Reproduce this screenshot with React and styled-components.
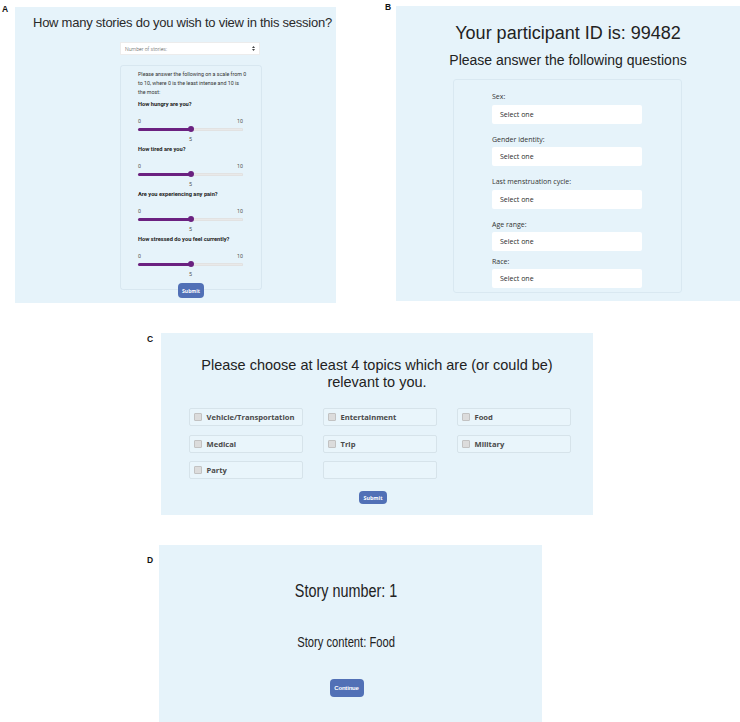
import React from "react";
import styled, { createGlobalStyle } from "styled-components";

const GlobalStyle = createGlobalStyle`
  html, body { margin: 0; padding: 0; background: #ffffff; }
  body { font-family: "Liberation Sans", Arial, sans-serif; color: #222; }
  * { box-sizing: border-box; }
`;

const Page = styled.div`
  width: 740px;
  height: 722px;
  overflow: hidden;
  display: flex;
  flex-direction: column;
`;

const TopRow = styled.div`
  display: flex;
  align-items: flex-start;
`;

const Figure = styled.section`
  display: flex;
  align-items: flex-start;
  margin-left: ${(p) => p.$left || 0}px;
  margin-top: ${(p) => p.$top || 0}px;
`;

const FigureLabel = styled.span`
  flex: none;
  width: ${(p) => p.$width}px;
  padding-left: ${(p) => p.$inset || 0}px;
  margin-top: ${(p) => p.$drop || 0}px;
  font: 700 8.5px/1 "Liberation Sans", Arial, sans-serif;
  color: #111;
`;

const Panel = styled.div`
  flex: none;
  width: ${(p) => p.$w}px;
  height: ${(p) => p.$h}px;
  margin-top: ${(p) => p.$top || 0}px;
  padding: ${(p) => p.$pad || "0"};
  background: #e6f3fa;
  display: flex;
  flex-direction: column;
  align-items: ${(p) => p.$align || "center"};
`;

/* ---------- shared ---------- */

const ActionButton = styled.button`
  border: none;
  border-radius: 4px;
  background: #5170b6;
  color: #fff;
  font-family: "Open Sans", "Liberation Sans", sans-serif;
  font-weight: 700;
  font-size: ${(p) => p.$size}px;
  width: ${(p) => p.$w}px;
  height: ${(p) => p.$h}px;
  margin-top: ${(p) => p.$top || 0}px;
  margin-right: ${(p) => p.$shift || 0}px;
  padding: 0;
  display: flex;
  align-items: center;
  justify-content: center;
  cursor: pointer;
`;

/* ---------- A: session length + ratings ---------- */

const SessionTitle = styled.h1`
  margin: 0;
  font-weight: 400;
  font-size: 13px;
  line-height: 16px;
  letter-spacing: -0.25px;
  white-space: nowrap;
  color: #2a2a2a;
  padding-left: 18px;
`;

const SessionForm = styled.div`
  margin-left: 105px;
  width: 142px;
  display: flex;
  flex-direction: column;
  align-items: center;
`;

const StoryCountSelect = styled.div`
  width: 140px;
  height: 13px;
  margin-top: 11px;
  align-self: flex-start;
  background: #fff;
  border: 1px solid #ececec;
  display: flex;
  align-items: center;
  justify-content: space-between;
  padding: 0 4px 0 4px;
  font-family: Roboto, sans-serif;
  font-weight: 300;
  font-size: 5.2px;
  color: #555;
`;

const RatingCard = styled.div`
  width: 142px;
  margin-top: 10px;
  padding: 4px 18px 9px 17px;
  border: 1px solid rgba(140, 170, 190, 0.16);
  border-radius: 3px;
  font-family: Roboto, sans-serif;
  font-size: 5.3px;
  color: #333;
`;

const Intro = styled.p`
  margin: 0 0 3px;
  line-height: 9px;
  white-space: nowrap;
`;

const Question = styled.div`
  display: flex;
  flex-direction: column;
  height: 45px;
`;

const QuestionLabel = styled.div`
  font-weight: 700;
  font-size: 5.7px;
  line-height: 9px;
  color: #222;
`;

const ScaleEnds = styled.div`
  margin-top: 8px;
  display: flex;
  justify-content: space-between;
  line-height: 9px;
  color: #555;
`;

const Track = styled.div`
  position: relative;
  height: 3px;
  margin: 1.5px 0;
  border-radius: 2px;
  background: #e9e9e9;
  box-shadow: inset 0 0 0 0.5px #dcdcdc;
`;

const TrackFill = styled.div`
  height: 100%;
  border-radius: 2px;
  background: #6b2180;
`;

const Thumb = styled.span`
  position: absolute;
  top: 50%;
  width: 6px;
  height: 6px;
  margin: -3px 0 0 -3px;
  border-radius: 50%;
  background: #6b2180;
`;

const ScaleValue = styled.div`
  margin-top: 3px;
  text-align: center;
  line-height: 9px;
  color: #555;
`;

function RatingSlider({ label, value, max }) {
  const pct = `${(value / max) * 100}%`;
  return (
    <Question>
      <QuestionLabel>{label}</QuestionLabel>
      <ScaleEnds>
        <span>0</span>
        <span>{max}</span>
      </ScaleEnds>
      <Track>
        <TrackFill style={{ width: pct }} />
        <Thumb style={{ left: pct }} />
      </Track>
      <ScaleValue>{value}</ScaleValue>
    </Question>
  );
}

function UpDownArrows() {
  return (
    <svg width="3" height="5" viewBox="0 0 6 10" aria-hidden="true">
      <path d="M3 0 L6 4 H0 Z M3 10 L0 6 H6 Z" fill="#444" />
    </svg>
  );
}

/* ---------- B: demographics ---------- */

const ParticipantTitle = styled.h1`
  margin: 16px 0 0;
  font-weight: 400;
  font-size: 18px;
  line-height: 22px;
  color: #222;
`;

const ParticipantSubtitle = styled.h2`
  margin: 7.5px 0 0;
  font-weight: 400;
  font-size: 14px;
  line-height: 17px;
  color: #222;
`;

const DemographicsCard = styled.div`
  width: 229px;
  height: 214px;
  margin: 10px 2px 0 0;
  padding: 12.5px 0 4px;
  border: 1px solid rgba(140, 170, 190, 0.14);
  border-radius: 3px;
  display: flex;
  flex-direction: column;
  align-items: center;
  font-family: "Open Sans", "Noto Sans", sans-serif;
  font-size: 7px;
  color: #333;
`;

const Field = styled.div`
  width: 150px;
  margin-top: ${(p) => p.$gap || 0}px;
  display: flex;
  flex-direction: column;
`;

const FieldLabel = styled.label`
  line-height: 9px;
  margin-bottom: ${(p) => p.$space}px;
`;

const SelectBox = styled.div`
  height: 19px;
  background: #fff;
  border-radius: 2px;
  padding-left: 8px;
  display: flex;
  align-items: center;
  color: #2a2a2a;
`;

/* ---------- C: topics ---------- */

const TopicsTitle = styled.h2`
  margin: 23.5px 0 0;
  max-width: 360px;
  font-weight: 400;
  font-size: 14.5px;
  line-height: 17px;
  text-align: center;
  color: #222;
`;

const TopicGrid = styled.div`
  align-self: flex-start;
  margin: 17.5px 0 0 28px;
  display: grid;
  grid-template-columns: repeat(3, 114px);
  column-gap: 20px;
  row-gap: 8.5px;
`;

const TopicCell = styled.label`
  height: 18px;
  border: 1px solid #d6e3ea;
  border-radius: 2px;
  background: #e9f5fb;
  display: flex;
  align-items: center;
  gap: 4.5px;
  padding-left: 4px;
  font-family: "Open Sans", "Noto Sans", sans-serif;
  font-weight: 700;
  font-size: 7.6px;
  color: #4a4a4a;
`;

const CheckBox = styled.span`
  width: 8px;
  height: 8px;
  flex: none;
  background: #dcdcdc;
  border: 1px solid #c2c2c2;
  border-radius: 1px;
`;

/* ---------- D: story ---------- */

const Condensed = styled.div`
  transform: scaleX(0.8);
  white-space: nowrap;
  color: #222;
`;

const StoryHeading = styled(Condensed)`
  margin-top: 35px;
  font-size: 18px;
  line-height: 22px;
`;

const StoryBody = styled(Condensed)`
  margin-top: 31.5px;
  font-size: 14px;
  line-height: 17px;
`;

const ContinueButton = styled(ActionButton)`
  font-family: "Liberation Sans", Arial, sans-serif;
  letter-spacing: -0.2px;
`;

const ratings = [
  "How hungry are you?",
  "How tired are you?",
  "Are you experiencing any pain?",
  "How stressed do you feel currently?",
];

const demographics = [
  { label: "Sex:", gap: 0, space: 3.5 },
  { label: "Gender identity:", gap: 11, space: 3.5 },
  { label: "Last menstruation cycle:", gap: 11, space: 3.5 },
  { label: "Age range:", gap: 11, space: 3.5 },
  { label: "Race:", gap: 6, space: 2.5 },
];

const topics = [
  "Vehicle/Transportation",
  "Entertainment",
  "Food",
  "Medical",
  "Trip",
  "Military",
  "Party",
  null,
];

export default function App() {
  return (
    <>
      <GlobalStyle />
      <Page>
        <TopRow>
          <Figure>
            <FigureLabel $width={15} $inset={2} $drop={5}>A</FigureLabel>
            <Panel $w={321} $h={296} $top={7} $align="flex-start" $pad="8px 0 0">
              <SessionTitle>How many stories do you wish to view in this session?</SessionTitle>
              <SessionForm>
                <StoryCountSelect>
                  <span>Number of stories:</span>
                  <UpDownArrows />
                </StoryCountSelect>
                <RatingCard>
                  <Intro>
                    Please answer the following on a scale from 0
                    <br />
                    to 10, where 0 is the least intense and 10 is
                    <br />
                    the most:
                  </Intro>
                  {ratings.map((q) => (
                    <RatingSlider key={q} label={q} value={5} max={10} />
                  ))}
                </RatingCard>
                <ActionButton $w={26} $h={15} $size={5} $top={-7}>Submit</ActionButton>
              </SessionForm>
            </Panel>
          </Figure>

          <Figure $left={47}>
            <FigureLabel $width={13} $inset={2} $drop={3}>B</FigureLabel>
            <Panel $w={344} $h={295} $top={6}>
              <ParticipantTitle>Your participant ID is: 99482</ParticipantTitle>
              <ParticipantSubtitle>Please answer the following questions</ParticipantSubtitle>
              <DemographicsCard>
                {demographics.map((f) => (
                  <Field key={f.label} $gap={f.gap}>
                    <FieldLabel $space={f.space}>{f.label}</FieldLabel>
                    <SelectBox>Select one</SelectBox>
                  </Field>
                ))}
              </DemographicsCard>
            </Panel>
          </Figure>
        </TopRow>

        <Figure $left={143} $top={30}>
          <FigureLabel $width={18} $inset={4} $drop={2}>C</FigureLabel>
          <Panel $w={432} $h={182}>
            <TopicsTitle>Please choose at least 4 topics which are (or could be) relevant to you.</TopicsTitle>
            <TopicGrid>
              {topics.map((t, i) =>
                t ? (
                  <TopicCell key={t}>
                    <CheckBox />
                    {t}
                  </TopicCell>
                ) : (
                  <TopicCell key={`blank-${i}`} />
                )
              )}
            </TopicGrid>
            <ActionButton $w={28} $h={13} $size={5.3} $top={12} $shift={8}>
              Submit
            </ActionButton>
          </Panel>
        </Figure>

        <Figure $left={143} $top={30}>
          <FigureLabel $width={16} $inset={4} $drop={11}>D</FigureLabel>
          <Panel $w={383} $h={180} $pad="0 8px 0 0">
            <StoryHeading>Story number: 1</StoryHeading>
            <StoryBody>Story content: Food</StoryBody>
            <ContinueButton $w={34} $h={18} $size={6} $top={28.5}>Continue</ContinueButton>
          </Panel>
        </Figure>
      </Page>
    </>
  );
}
